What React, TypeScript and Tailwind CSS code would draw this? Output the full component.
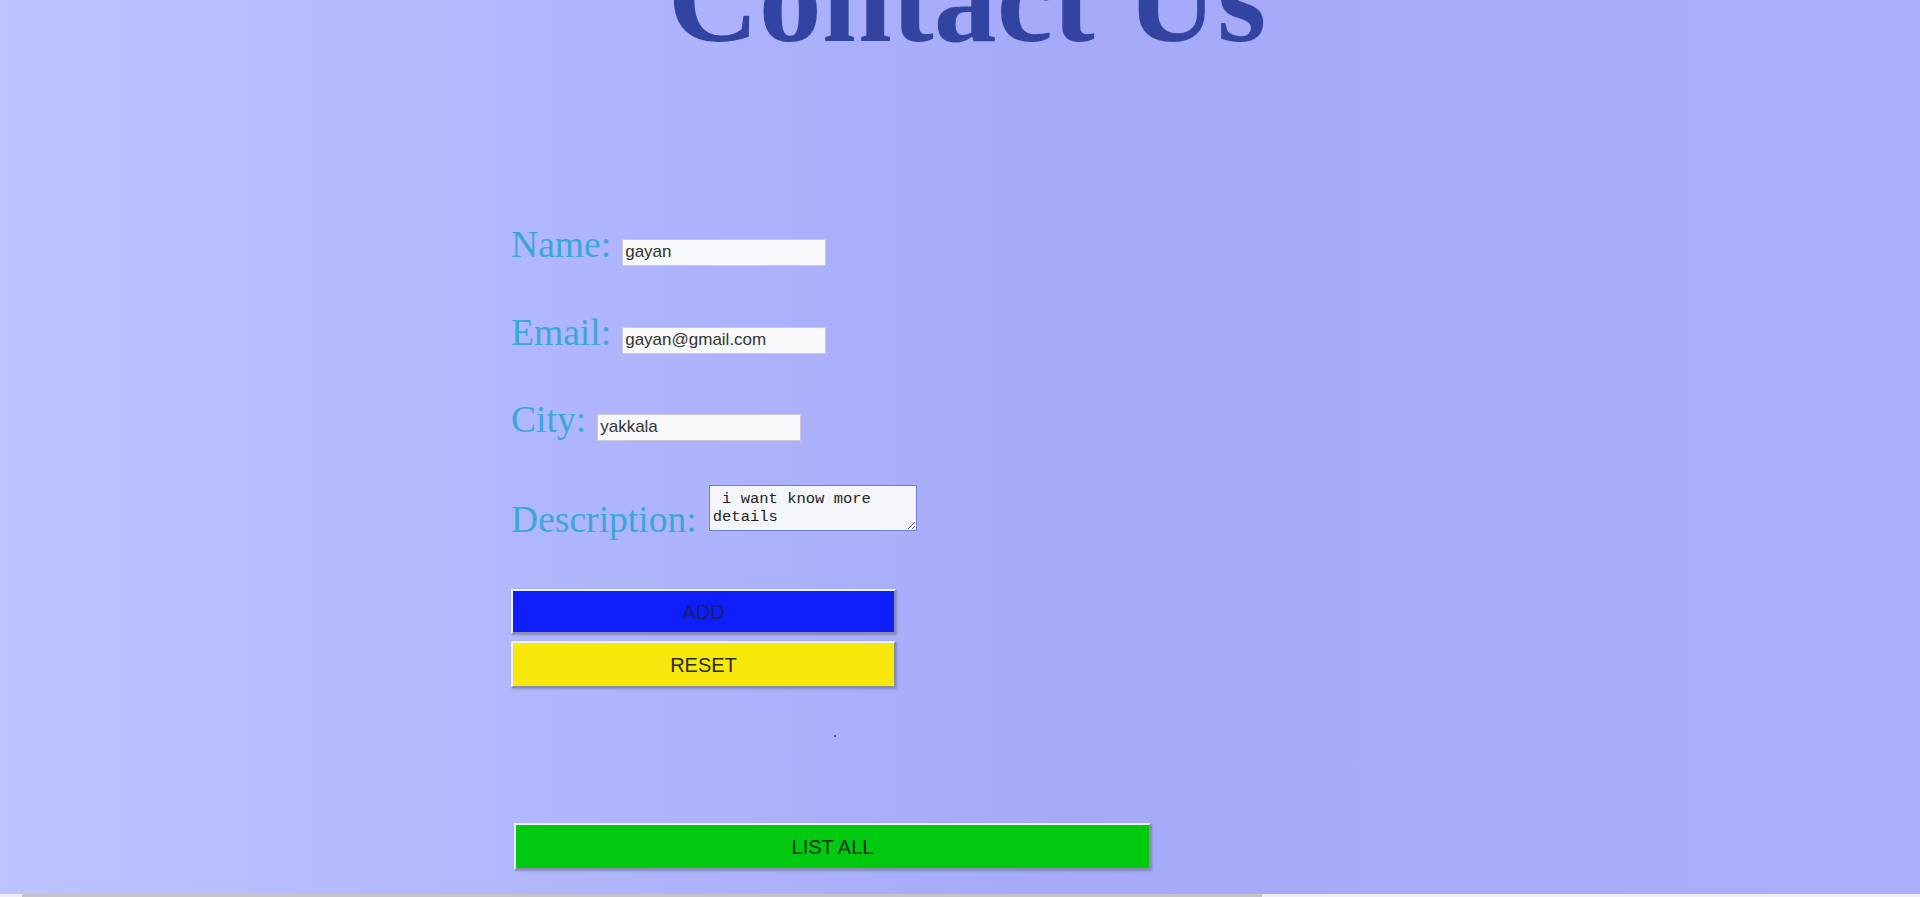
import { useState } from 'react';

export default function App() {
  const [name, setName] = useState('gayan');
  const [email, setEmail] = useState('gayan@gmail.com');
  const [city, setCity] = useState('yakkala');
  const [description, setDescription] = useState(' i want know more details');

  const label = "text-[37.6px] leading-[37px] text-[#3aa7dc] font-['Liberation_Serif',serif] whitespace-nowrap";
  const input =
    "h-[27px] w-[204px] bg-[#f8f9fb] border border-[#c9cad4] px-[2px] text-[17px] text-[#333] font-['Liberation_Sans',Arial,sans-serif] outline-none";
  const button =
    "border-2 border-t-[#eef0fa] border-l-[#eef0fa] border-b-[#8c8ea6] border-r-[#8c8ea6] text-[20px] font-['Liberation_Sans',Arial,sans-serif] shadow-[1px_1px_2px_rgba(60,60,90,0.35)]";

  return (
    <div className="w-full h-[897px] overflow-hidden flex flex-col bg-[linear-gradient(90deg,#bcc3ff_0%,#b0b6fd_30%,#a4aaf8_55%,#a6acfa_75%,#aab0fe_100%)]">
      {/* Heading */}
      <h1 className="mt-[-64px] pl-[14px] text-center text-[126px] leading-[126px] font-bold text-[#3343a2] font-['Liberation_Serif',serif]">
        Contact Us
      </h1>

      {/* Form */}
      <form className="mt-[164px] pl-[511px] flex flex-col" onSubmit={(e) => e.preventDefault()}>
        <div className="h-[88px] flex items-baseline">
          <span className={label}>Name:</span>
          <input className={`${input} ml-[11px]`} value={name} onChange={(e) => setName(e.target.value)} />
        </div>
        <div className="h-[87px] flex items-baseline">
          <span className={label}>Email:</span>
          <input className={`${input} ml-[11px]`} value={email} onChange={(e) => setEmail(e.target.value)} />
        </div>
        <div className="h-[84px] flex items-baseline">
          <span className={label}>City:</span>
          <input className={`${input} ml-[11px]`} value={city} onChange={(e) => setCity(e.target.value)} />
        </div>
        <div className="flex items-end">
          <span className={label}>Description:</span>
          <textarea
            className="ml-[12px] mb-[7px] w-[208px] h-[46px] bg-[#f4f6fc] border border-[#6b80d6] pl-[3px] pt-[4px] text-[15.5px] leading-[18px] text-[#222] font-['Liberation_Mono',monospace] outline-none"
            value={description}
            onChange={(e) => setDescription(e.target.value)}
          />
        </div>

        <button type="submit" className={`${button} mt-[51px] w-[385px] h-[45px] bg-[#0d1efb] text-[#15206e]`}>
          ADD
        </button>
        <button type="reset" className={`${button} mt-[7px] w-[385px] h-[47px] bg-[#f7e70b] text-[#2a2a18]`}>
          RESET
        </button>

        <div className="mt-[47px] ml-[323px] w-[2px] h-[2px] bg-[#4a55b0]" />

        <button type="button" className={`${button} mt-[86px] ml-[3px] w-[637px] h-[47px] bg-[#00c90f] text-[#0c330c]`}>
          LIST ALL
        </button>
      </form>

      {/* Horizontal scrollbar */}
      <div className="mt-auto h-[3px] flex bg-[#eeeef6]">
        <div className="ml-[22px] w-[1240px] bg-[#c3c3c8]" />
      </div>
    </div>
  );
}
